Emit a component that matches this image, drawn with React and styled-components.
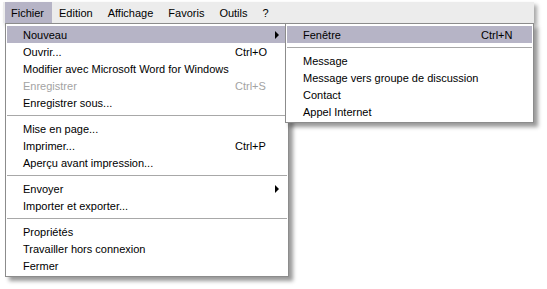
import React from 'react'
import styled, { createGlobalStyle } from 'styled-components'

const GlobalStyle = createGlobalStyle`
    body {
        margin: 0;
        background: #ffffff;
        font-family: "Liberation Sans", Arial, sans-serif;
        font-size: 11px;
        color: #000;
    }
`

const menuBar = ['Fichier', 'Edition', 'Affichage', 'Favoris', 'Outils', '?']

const fileMenu = [
    { label: 'Nouveau', sub: true, active: true },
    { label: 'Ouvrir...', key: 'Ctrl+O' },
    { label: 'Modifier avec Microsoft Word for Windows' },
    { label: 'Enregistrer', key: 'Ctrl+S', disabled: true },
    { label: 'Enregistrer sous...' },
    { sep: true },
    { label: 'Mise en page...' },
    { label: 'Imprimer...', key: 'Ctrl+P' },
    { label: 'Aperçu avant impression...' },
    { sep: true },
    { label: 'Envoyer', sub: true },
    { label: 'Importer et exporter...' },
    { sep: true },
    { label: 'Propriétés' },
    { label: 'Travailler hors connexion' },
    { label: 'Fermer' },
]

const newMenu = [
    { label: 'Fenêtre', key: 'Ctrl+N', active: true },
    { sep: true },
    { label: 'Message' },
    { label: 'Message vers groupe de discussion' },
    { label: 'Contact' },
    { label: 'Appel Internet' },
]

function Menu({ items, left, width, keyCol }) {
    return (
        <Dropdown left={left} width={width}>
            {items.map((it, i) =>
                it.sep ? (
                    <Separator key={i} />
                ) : (
                    <Item key={i} active={it.active} disabled={it.disabled} keyCol={keyCol}>
                        <span>{it.label}</span>
                        <span>{it.key}</span>
                        {it.sub ? <Arrow /> : <span />}
                    </Item>
                )
            )}
        </Dropdown>
    )
}

export default function App() {
    return (
        <Page>
            <GlobalStyle />
            <Bar>
                {menuBar.map((m, i) => (
                    <BarItem key={m} active={i === 0}>{m}</BarItem>
                ))}
            </Bar>
            <Menu items={fileMenu} left={5} width={284} keyCol={212} />
            <Menu items={newMenu} left={285} width={249} keyCol={178} />
        </Page>
    )
}

const Page = styled.div`
    position: relative;
    width: 547px;
    height: 289px;
    padding: 2px 0 0 3px;
    box-sizing: border-box;
`

const Bar = styled.div`
    display: flex;
    align-items: stretch;
    width: 531px;
    height: 21px;
    padding-left: 2px;
    box-sizing: border-box;
    background: #ececec;
    box-shadow: 3px 3px 4px rgba(0, 0, 0, 0.35);
`

const BarItem = styled.div`
    display: flex;
    align-items: center;
    padding: 0 8px 0 6px;
    margin-right: 1px;
    background: ${(p) => (p.active ? '#b6b4c6' : 'transparent')};
`

const Dropdown = styled.div`
    position: absolute;
    top: 23px;
    left: ${(p) => p.left}px;
    width: ${(p) => p.width}px;
    box-sizing: border-box;
    background: #fff;
    border: 1px solid #8c8c8c;
    padding: 2px 1px;
    box-shadow: 4px 4px 4px rgba(0, 0, 0, 0.4);
`

const Item = styled.div`
    display: grid;
    grid-template-columns: ${(p) => p.keyCol}px 1fr 12px;
    align-items: center;
    height: 17px;
    padding-left: 16px;
    background: ${(p) => (p.active ? '#b6b4c6' : 'transparent')};
    color: ${(p) => (p.disabled ? '#a3a3a3' : '#000')};
    white-space: nowrap;
`

const Arrow = styled.span`
    width: 0;
    height: 0;
    border-top: 4px solid transparent;
    border-bottom: 4px solid transparent;
    border-left: 4px solid #000;
`

const Separator = styled.div`
    height: 9px;
    display: flex;
    align-items: center;
    &::after {
        content: '';
        flex: 1;
        height: 1px;
        background: #a8a8a8;
        margin-top: -1px;
    }
`
